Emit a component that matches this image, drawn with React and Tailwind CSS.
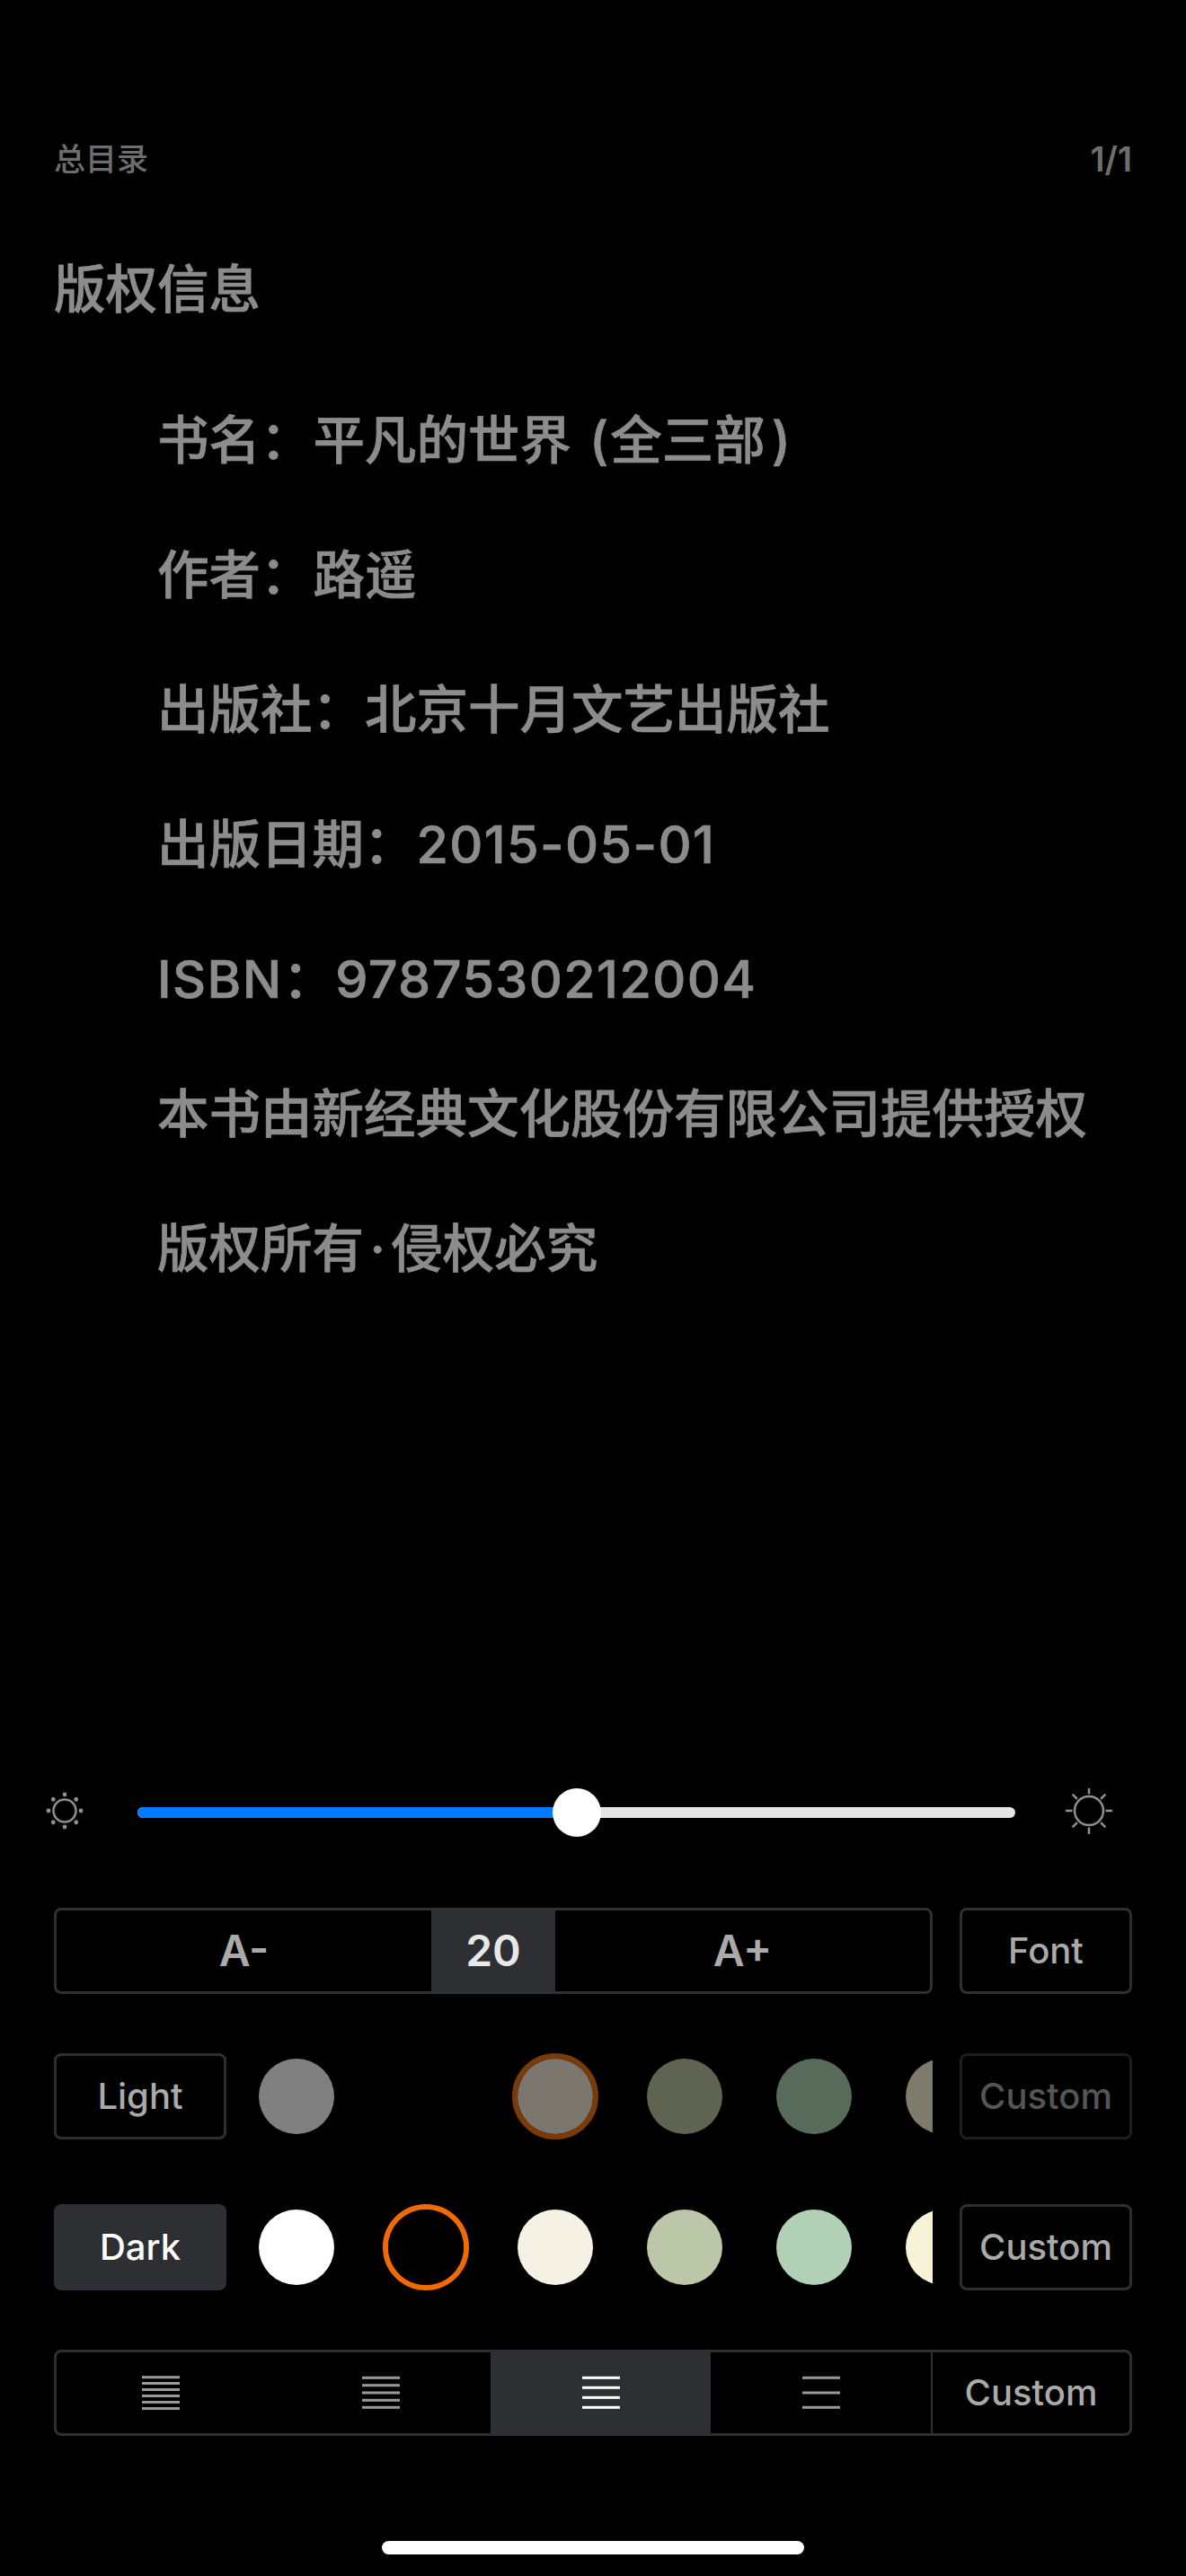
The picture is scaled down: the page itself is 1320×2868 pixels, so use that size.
import React from "react";

const lines = [
  "书名：平凡的世界（全三部）",
  "作者：路遥",
  "出版社：北京十月文艺出版社",
  "出版日期：2015-05-01",
  "ISBN：9787530212004",
  "本书由新经典文化股份有限公司提供授权",
  "版权所有·侵权必究",
];

const lightSwatches = [
  { color: "#808080" },
  { color: "#000000" },
  { color: "#7b776f", ring: "border-[#7a3b08]" },
  { color: "#5f6351" },
  { color: "#586b5b" },
  { color: "#7e7a6c" },
];

const darkSwatches = [
  { color: "#ffffff" },
  { color: "#000000", ring: "border-[#f06a00]" },
  { color: "#f6f1e5" },
  { color: "#bcc6a8" },
  { color: "#b2d0b6" },
  { color: "#f8f2d6" },
];

const spacings = [
  { tops: [1.2, 8, 15, 22, 29, 36], width: "w-[238px] pr-[6px]" },
  { tops: [1.8, 10.2, 18.5, 26.8, 34.8], width: "w-[245px]" },
  { tops: [1.8, 12.8, 23.8, 34.8], width: "w-[245px]", active: true },
  { tops: [1.8, 18.5, 34.8], width: "w-[245px]" },
];

// the book page sets punctuation and latin runs a bit differently from the CJK text
function BookLine({ text }) {
  const parts = text.split(/(：|（|）|·|[A-Za-z0-9-]+)/).filter(Boolean);
  return parts.map((p, i) => {
    if (p === "：") return <span key={i} className="mr-[1px]">{p}</span>;
    if (p === "（") return <span key={i} className="ml-[20px] mr-[2px]">(</span>;
    if (p === "）") return <span key={i} className="ml-[7px]">)</span>;
    if (p === "·") return <span key={i} className="mx-[6.4px]">{p}</span>;
    if (/^[A-Za-z0-9-]+$/.test(p)) return <span key={i} className="tracking-[1.4px]">{p}</span>;
    return <span key={i}>{p}</span>;
  });
}

function SmallSun() {
  const dots = [0, 45, 90, 135, 180, 225, 270, 315];
  return (
    <svg width="54" height="54" viewBox="0 0 54 54" className="shrink-0">
      <circle cx="27" cy="25" r="12.5" fill="none" stroke="#8f8f8f" strokeWidth="2.5" />
      {dots.map((a) => (
        <circle key={a} cx="27" cy="7" r="2.4" fill="#8f8f8f" transform={`rotate(${a} 27 25)`} />
      ))}
    </svg>
  );
}

function BigSun() {
  const rays = [0, 45, 90, 135, 180, 225, 270, 315];
  return (
    <svg width="54" height="54" viewBox="0 0 54 54" className="shrink-0">
      <circle cx="27" cy="25" r="16" fill="none" stroke="#8f8f8f" strokeWidth="2.5" />
      {rays.map((a) => (
        <line
          key={a}
          x1="27"
          y1="-1"
          x2="27"
          y2="6.5"
          stroke="#8f8f8f"
          strokeWidth="2.5"
          transform={`rotate(${a} 27 25)`}
        />
      ))}
    </svg>
  );
}

function SpacingIcon({ tops, active }) {
  return (
    <svg width="42" height="40" viewBox="0 0 42 40">
      {tops.map((y) => (
        <rect key={y} x="0" y={y} width="42" height="3" fill={active ? "#ffffff" : "#999999"} />
      ))}
    </svg>
  );
}

function Swatches({ items }) {
  return (
    <div className="ml-[30px] w-[756px] flex gap-[48px] overflow-hidden">
      {items.map((s, i) => (
        <div
          key={i}
          className={`w-[96px] h-[96px] shrink-0 rounded-full border-[6px] ${s.ring || "border-transparent"}`}
        >
          <div className="w-full h-full rounded-full" style={{ backgroundColor: s.color }} />
        </div>
      ))}
    </div>
  );
}

export default function App() {
  return (
    <div className="w-[1320px] h-[2868px] bg-black flex flex-col font-['Inter','Noto_Sans_CJK_SC',sans-serif] overflow-hidden">
      {/* Reader header */}
      <div className="mt-[150px] h-[54px] px-[60px] flex items-center justify-between text-[35px] font-medium text-[#6e6e6e]">
        <span>总目录</span>
        <span className="text-[38px] font-semibold">1/1</span>
      </div>

      <h1 className="mt-[90px] ml-[60px] h-[56px] leading-[56px] text-[57.5px] font-medium [-webkit-text-stroke:0.7px_#8c8c8c] text-[#8c8c8c]">
        版权信息
      </h1>

      <div className="mt-[65px] pl-[175px] text-[#8c8c8c] text-[57.5px] font-medium [-webkit-text-stroke:0.7px_#8c8c8c]">
        {lines.map((t) => (
          <p key={t} className="h-[150px] leading-[150px] whitespace-nowrap">
            <BookLine text={t} />
          </p>
        ))}
      </div>

      {/* Settings panel */}
      <div className="mt-auto">
        <div className="h-[54px] pl-[45px] flex items-center">
          <SmallSun />
          <div className="relative ml-[54px] w-[977px] h-[12px] rounded-full bg-[#e5e5e5]">
            <div className="w-[489px] h-full rounded-l-full bg-[#007aff]" />
            <div className="absolute left-[462px] top-[-21px] w-[54px] h-[54px] rounded-full bg-white" />
          </div>
          <div className="ml-[55px]">
            <BigSun />
          </div>
        </div>

        <div className="mt-[79px] px-[60px] flex justify-between">
          <div className="w-[978px] h-[96px] border-[3px] border-[#2e2f33] rounded-[8px] flex text-[48px] font-semibold text-[#aaaaaa]">
            <div className="flex-1 flex items-center justify-center">A-</div>
            <div className="w-[138px] -my-[3px] bg-[#2e2f33] flex items-center justify-center text-[#e8e8e8]">
              20
            </div>
            <div className="flex-1 flex items-center justify-center">A+</div>
          </div>
          <div className="w-[192px] h-[96px] border-[3px] border-[#2e2f33] rounded-[8px] flex items-center justify-center text-[40px] font-medium text-[#aaaaaa]">
            Font
          </div>
        </div>

        <div className="mt-[66px] px-[60px] flex items-center">
          <div className="w-[192px] h-[96px] border-[3px] border-[#2e2f33] rounded-[8px] flex items-center justify-center text-[40px] font-medium text-[#aaaaaa]">
            Light
          </div>
          <Swatches items={lightSwatches} />
          <div className="ml-[30px] w-[192px] h-[96px] border-[3px] border-[#1d1d20] rounded-[8px] flex items-center justify-center text-[40px] font-medium text-[#555555]">
            Custom
          </div>
        </div>

        <div className="mt-[72px] px-[60px] flex items-center">
          <div className="w-[192px] h-[96px] bg-[#2e2f33] rounded-[8px] flex items-center justify-center text-[40px] font-medium text-white">
            Dark
          </div>
          <Swatches items={darkSwatches} />
          <div className="ml-[30px] w-[192px] h-[96px] border-[3px] border-[#2e2f33] rounded-[8px] flex items-center justify-center text-[40px] font-medium text-[#aaaaaa]">
            Custom
          </div>
        </div>

        <div className="mt-[66px] mx-[60px] h-[96px] border-[3px] border-[#2e2f33] rounded-[8px] flex">
          {spacings.map((s, i) => (
            <div
              key={i}
              className={`${s.width} flex items-center justify-center ${s.active ? "-my-[3px] bg-[#2e2f33]" : ""}`}
            >
              <SpacingIcon tops={s.tops} active={s.active} />
            </div>
          ))}
          <div className="w-[221px] border-l-[2px] border-[#2e2f33] flex items-center justify-center text-[40px] font-medium text-[#aaaaaa]">
            Custom
          </div>
        </div>

        <div className="mt-[117px] mb-[24px] mx-auto w-[470px] h-[15px] rounded-full bg-white" />
      </div>
    </div>
  );
}
